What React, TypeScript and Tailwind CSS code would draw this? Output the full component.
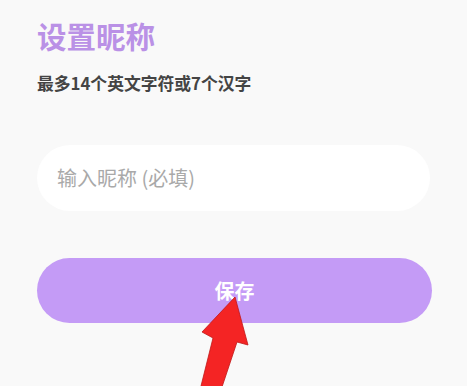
export default function App() {
  return (
    <div className="relative w-[467px] h-[386px] overflow-hidden bg-[#f9f9f9]" style={{ fontFamily: '"Noto Sans CJK SC", "Noto Sans", sans-serif' }}>
      <div className="flex flex-col pl-[37px] pr-[35px] pt-[19px]">
        <div className="text-[29.5px] leading-[32px] font-bold text-[#ba91e6]">设置昵称</div>
        <div className="mt-[22px] text-[16.8px] leading-[20px] font-bold text-[#444444]">最多14个英文字符或7个汉字</div>
        <div className="mt-[52px] h-[66px] w-[393px] rounded-full bg-white flex items-center pl-[20px]">
          <span className="text-[20px] text-[#a9a9a9]">输入昵称 (必填)</span>
        </div>
        <div className="mt-[47px] h-[65px] w-[395px] rounded-full bg-[#c49bf6] flex items-center justify-center">
          <span className="text-[20px] font-bold text-white">保存</span>
        </div>
      </div>
      <svg className="absolute left-0 top-0" width="467" height="386" viewBox="0 0 467 386">
        <polygon points="235,297 248,345 237,342 221,390 200,390 213,338 202,332" fill="#f42424" stroke="#c01818" strokeWidth="0.8" />
      </svg>
    </div>
  );
}
